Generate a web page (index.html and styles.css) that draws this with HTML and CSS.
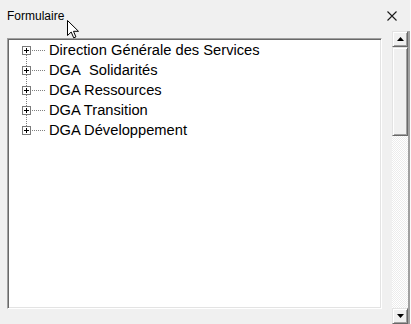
FILE: index.html
```html
<!DOCTYPE html>
<html lang="fr">
<head>
    <meta charset="UTF-8">
    <meta name="viewport" content="width=device-width, initial-scale=1.0">
    <title>Formulaire</title>
    <link rel="stylesheet" href="styles.css">
</head>
<body>

    <div class="window">

        <div class="titlebar">
            <span class="title">Formulaire</span>
            <svg class="close" width="10" height="10" viewBox="0 0 10 10">
                <path d="M0.5 0.5L9.5 9.5M9.5 0.5L0.5 9.5" stroke="#1a1a1a" stroke-width="1.1" fill="none"/>
            </svg>
        </div>

        <svg class="cursor" width="13" height="19" viewBox="0 0 13 19">
            <path d="M0.5 0.5V15.5L4.2 12L6.7 17.8L8.9 16.9L6.5 11.3H11.5Z" fill="#fff" stroke="#000" stroke-width="1"/>
        </svg>

        <div class="content">

            <div class="tree">
                <ul class="nodes">
                    <li class="node">
                        <svg class="toggle" width="9" height="9" viewBox="0 0 9 9"><rect x="0.5" y="0.5" width="8" height="8" fill="#fff" stroke="#7a7a7a"/><path d="M2 4.5h5M4.5 2v5" stroke="#000"/></svg>
                        <span class="link"></span>
                        <span class="label">Direction Générale des Services</span>
                    </li>
                    <li class="node">
                        <svg class="toggle" width="9" height="9" viewBox="0 0 9 9"><rect x="0.5" y="0.5" width="8" height="8" fill="#fff" stroke="#7a7a7a"/><path d="M2 4.5h5M4.5 2v5" stroke="#000"/></svg>
                        <span class="link"></span>
                        <span class="label">DGA&nbsp; Solidarités</span>
                    </li>
                    <li class="node">
                        <svg class="toggle" width="9" height="9" viewBox="0 0 9 9"><rect x="0.5" y="0.5" width="8" height="8" fill="#fff" stroke="#7a7a7a"/><path d="M2 4.5h5M4.5 2v5" stroke="#000"/></svg>
                        <span class="link"></span>
                        <span class="label">DGA Ressources</span>
                    </li>
                    <li class="node">
                        <svg class="toggle" width="9" height="9" viewBox="0 0 9 9"><rect x="0.5" y="0.5" width="8" height="8" fill="#fff" stroke="#7a7a7a"/><path d="M2 4.5h5M4.5 2v5" stroke="#000"/></svg>
                        <span class="link"></span>
                        <span class="label">DGA Transition</span>
                    </li>
                    <li class="node">
                        <svg class="toggle" width="9" height="9" viewBox="0 0 9 9"><rect x="0.5" y="0.5" width="8" height="8" fill="#fff" stroke="#7a7a7a"/><path d="M2 4.5h5M4.5 2v5" stroke="#000"/></svg>
                        <span class="link"></span>
                        <span class="label">DGA Développement</span>
                    </li>
                </ul>
            </div>

            <div class="scrollbar">
                <div class="btn">
                    <svg width="7" height="4" viewBox="0 0 7 4"><path d="M3.5 0L7 4H0Z" fill="#000"/></svg>
                </div>
                <div class="thumb"></div>
                <div class="track"></div>
                <div class="btn">
                    <svg width="7" height="4" viewBox="0 0 7 4"><path d="M0 0H7L3.5 4Z" fill="#000"/></svg>
                </div>
            </div>
        </div>
    </div>

</body>
</html>
```

FILE: styles.css
```css
*{
    margin: 0;
    padding: 0;
    box-sizing: border-box;
}
body{
    background: #f0f0f0;
    font-family: "Liberation Sans", Arial, sans-serif;
    overflow: hidden;
}
.window{
    width: 411px;
    height: 324px;
    position: relative;
    border-right: 1px solid #fafafa;
}
.titlebar{
    height: 31px;
    display: flex;
    align-items: center;
    justify-content: space-between;
    padding-left: 7px;
    padding-right: 13px;
}
.title{
    font-size: 12px;
    color: #000;
}
.cursor{
    position: absolute;
    left: 67px;
    top: 20px;
}
.content{
    display: flex;
    align-items: flex-start;
    padding-left: 7px;
}
.tree{
    margin-top: 7px;
    width: 375px;
    height: 271px;
    background: #fff;
    border: 1px solid;
    border-color: #a0a0a0 #fff #fff #a0a0a0;
    box-shadow: inset 1px 1px #696969, inset -1px -1px #e3e3e3;
}
.nodes{
    list-style: none;
    position: relative;
    padding-top: 1px;
}
.nodes::before{
    content: "";
    position: absolute;
    left: 18px;
    top: 16px;
    height: 80px;
    width: 1px;
    background: repeating-linear-gradient(to bottom, #808080 0 1px, transparent 1px 2px);
}
.node{
    height: 20px;
    display: flex;
    align-items: center;
    position: relative;
}
.toggle{
    margin-left: 14px;
    flex: none;
}
.link{
    width: 14px;
    height: 1px;
    margin-left: 1px;
    margin-right: 3px;
    background: repeating-linear-gradient(to right, #808080 0 1px, transparent 1px 2px);
}
.label{
    font-size: 14.7px;
    color: #000;
    white-space: pre;
}
.scrollbar{
    margin-left: 10px;
    width: 18px;
    height: 293px;
    display: flex;
    flex-direction: column;
    border-right: 2px solid #a0a0a0;
}
.btn{
    height: 16px;
    display: flex;
    align-items: center;
    justify-content: center;
    background: #f0f0f0;
    border: 1px solid;
    border-color: #e3e3e3 #696969 #696969 #e3e3e3;
    box-shadow: inset 1px 1px #fff, inset -1px -1px #a0a0a0;
}
.thumb{
    height: 89px;
    background: #f0f0f0;
    border: 1px solid;
    border-color: #e3e3e3 #696969 #696969 #e3e3e3;
    box-shadow: inset 1px 1px #fff, inset -1px -1px #a0a0a0;
}
.track{
    flex: 1;
    background: repeating-conic-gradient(#fff 0 25%, #ececec 0 50%) 0 0 / 2px 2px;
}
```
